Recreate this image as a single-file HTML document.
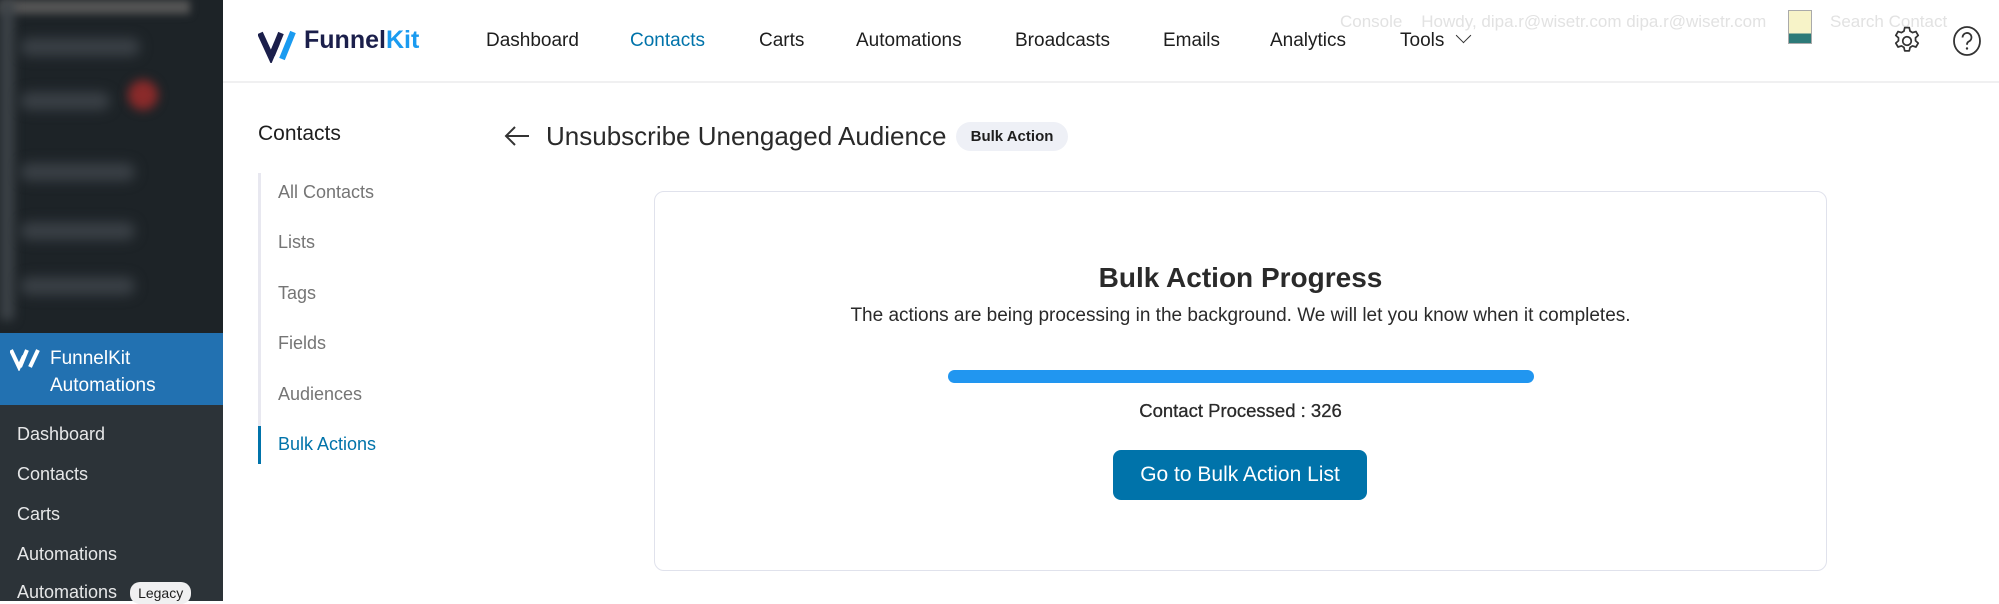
<!DOCTYPE html>
<html><head><meta charset="utf-8"><style>
*{margin:0;padding:0;box-sizing:border-box}
body{width:1999px;height:601px;overflow:hidden;background:#fff;font-family:"Liberation Sans",sans-serif;position:relative;color:#1e1e1e}
.a{position:absolute;white-space:nowrap}
#side{position:absolute;left:0;top:0;width:223px;height:601px;background:#2c3338}
#blur{position:absolute;left:0;top:0;width:223px;height:333px;background:#1d2327}
.bl{position:absolute;left:20px;height:18px;background:#3a4046;border-radius:9px;filter:blur(6px)}
#fk{position:absolute;left:0;top:333px;width:223px;height:72px;background:#2271b1}
.sm{position:absolute;left:17px;font-size:18px;color:#e6e7e8}
#hdr{position:absolute;left:223px;top:0;right:0;height:83px;border-bottom:2px solid #f0f0f1}
.nav{position:absolute;top:30px;font-size:19px;color:#1e1e1e}
.sn{position:absolute;left:278px;font-size:18px;color:#757575}
</style></head><body>
<div id="side">
 <div id="blur">
  <div class="a" style="left:0;top:0;width:190px;height:14px;background:#555;filter:blur(4px)"></div>
  <div class="a" style="left:0;top:0;width:14px;height:320px;background:#3d4348;filter:blur(5px)"></div>
  <div class="bl" style="top:38px;width:120px"></div>
  <div class="bl" style="top:92px;width:90px"></div>
  <div style="position:absolute;left:128px;top:80px;width:30px;height:30px;border-radius:50%;background:#8a2a2a;filter:blur(5px)"></div>
  <div class="bl" style="top:163px;width:115px"></div>
  <div class="bl" style="top:222px;width:115px"></div>
  <div class="bl" style="top:277px;width:115px"></div>
 </div>
 <div id="fk">
  <svg style="position:absolute;left:10px;top:14px" width="30" height="24" viewBox="0 0 30 24"><path d="M1 3 L9 20 L14 9 M17 3 L10 20" stroke="#fff" stroke-width="4" fill="none"/><path d="M28 3 L20 20" stroke="#fff" stroke-width="4"/></svg>
  <div class="a" style="left:50px;top:12px;font-size:19px;color:#fff;line-height:27px">FunnelKit<br>Automations</div>
 </div>
 <div class="sm" style="top:424px">Dashboard</div>
 <div class="sm" style="top:464px">Contacts</div>
 <div class="sm" style="top:504px">Carts</div>
 <div class="sm" style="top:544px">Automations</div>
 <div class="sm" style="top:582px">Automations <span style="background:#f0f0f1;color:#1e1e1e;font-size:14px;padding:3px 8px;border-radius:10px;margin-left:8px">Legacy</span></div>
</div>
<div id="hdr"></div>
<svg class="a" style="left:258px;top:29px" width="40" height="34" viewBox="0 0 40 34"><path d="M2 4 L13 28 L19 14" stroke="#1b1f4b" stroke-width="6" fill="none"/><path d="M35 3 L24 30" stroke="#1a9bf0" stroke-width="6"/><path d="M23 4 L14 26" stroke="#1b1f4b" stroke-width="6"/></svg>
<div class="a" style="left:304px;top:26px;font-size:25px;font-weight:bold;color:#1b1f4b">Funnel<span style="color:#1a9bf0">Kit</span></div>
<div class="nav" style="left:486px">Dashboard</div>
<div class="nav" style="left:630px;color:#0073aa">Contacts</div>
<div class="nav" style="left:759px">Carts</div>
<div class="nav" style="left:856px">Automations</div>
<div class="nav" style="left:1015px">Broadcasts</div>
<div class="nav" style="left:1163px">Emails</div>
<div class="nav" style="left:1270px">Analytics</div>
<div class="nav" style="left:1400px">Tools <span style="display:inline-block;width:11px;height:11px;border-right:1.5px solid #333;border-bottom:1.5px solid #333;transform:rotate(45deg);margin-left:8px;position:relative;top:-5px"></span></div>
<div class="a" style="left:1340px;top:12px;font-size:17px;color:#e2e2e2">Console&nbsp;&nbsp;&nbsp;&nbsp;Howdy, dipa.r@wisetr.com dipa.r@wisetr.com</div>
<div class="a" style="left:1788px;top:10px;width:24px;height:34px;background:linear-gradient(#f7f3c8 70%,#2d7a78 70%);border:1px solid #aaa"></div>
<div class="a" style="left:1830px;top:12px;font-size:17px;color:#e2e2e2">Search Contact</div>
<svg class="a" style="left:1891px;top:24px" width="32" height="34" viewBox="0 0 24 24"><circle cx="12" cy="12" r="3.2" fill="none" stroke="#333" stroke-width="1.3"/><path d="M10.3 2h3.4l.6 2.6 1.9 1.1 2.5-.8 1.7 2.9-2 1.8v2.2l2 1.8-1.7 2.9-2.5-.8-1.9 1.1-.6 2.6h-3.4l-.6-2.6-1.9-1.1-2.5.8-1.7-2.9 2-1.8v-2.2l-2-1.8 1.7-2.9 2.5.8 1.9-1.1z" fill="none" stroke="#333" stroke-width="1.3" stroke-linejoin="round"/></svg>
<svg class="a" style="left:1952px;top:25px" width="30" height="32" viewBox="0 0 30 32"><ellipse cx="15" cy="16" rx="13" ry="14" fill="none" stroke="#333" stroke-width="1.8"/><path d="M10.5 12.5 a4.5 4.5 0 1 1 6 4.2 c-1.2.6-1.5 1.3-1.5 3" fill="none" stroke="#333" stroke-width="1.8"/><circle cx="15" cy="23.5" r="1.2" fill="#333"/></svg>

<div class="a" style="left:258px;top:122px;font-size:21px;color:#1e1e1e">Contacts</div>
<div class="a" style="left:258px;top:173px;width:3px;height:290px;background:#e8e8f0"></div>
<div class="a" style="left:258px;top:426px;width:3px;height:38px;background:#0073aa"></div>
<div class="sn" style="top:182px">All Contacts</div>
<div class="sn" style="top:232px">Lists</div>
<div class="sn" style="top:283px">Tags</div>
<div class="sn" style="top:333px">Fields</div>
<div class="sn" style="top:384px">Audiences</div>
<div class="sn" style="top:434px;color:#0073aa">Bulk Actions</div>

<svg class="a" style="left:503px;top:124px" width="28" height="24" viewBox="0 0 28 24"><path d="M26 12H3M12 3L3 12l9 9" fill="none" stroke="#333" stroke-width="2"/></svg>
<div class="a" style="left:546px;top:121px;font-size:26px;color:#2a2a2a">Unsubscribe Unengaged Audience</div>
<div class="a" style="left:956px;top:122px;height:29px;width:112px;background:#eef0f6;border-radius:15px;font-size:15px;color:#1e1e1e;text-align:center;line-height:29px;font-weight:bold">Bulk Action</div>

<div class="a" style="left:654px;top:191px;width:1173px;height:380px;border:1.5px solid #e0e2ec;border-radius:10px"></div>
<div class="a" style="left:654px;top:262px;width:1173px;text-align:center;font-size:28px;font-weight:bold;color:#2a2a2a">Bulk Action Progress</div>
<div class="a" style="left:654px;top:305px;width:1173px;text-align:center;font-size:19px;color:#2a2a2a">The actions are being processing in the background. We will let you know when it completes.</div>
<div class="a" style="left:948px;top:370px;width:586px;height:13px;background:#2196f0;border-radius:7px"></div>
<div class="a" style="left:654px;top:400px;width:1173px;text-align:center;font-size:18.5px;color:#2a2a2a;-webkit-text-stroke:0.3px #2a2a2a">Contact Processed : 326</div>
<div class="a" style="left:1113px;top:450px;width:254px;height:50px;background:#0073aa;border-radius:8px;color:#fff;font-size:21px;text-align:center;line-height:50px">Go to Bulk Action List</div>
</body></html>
